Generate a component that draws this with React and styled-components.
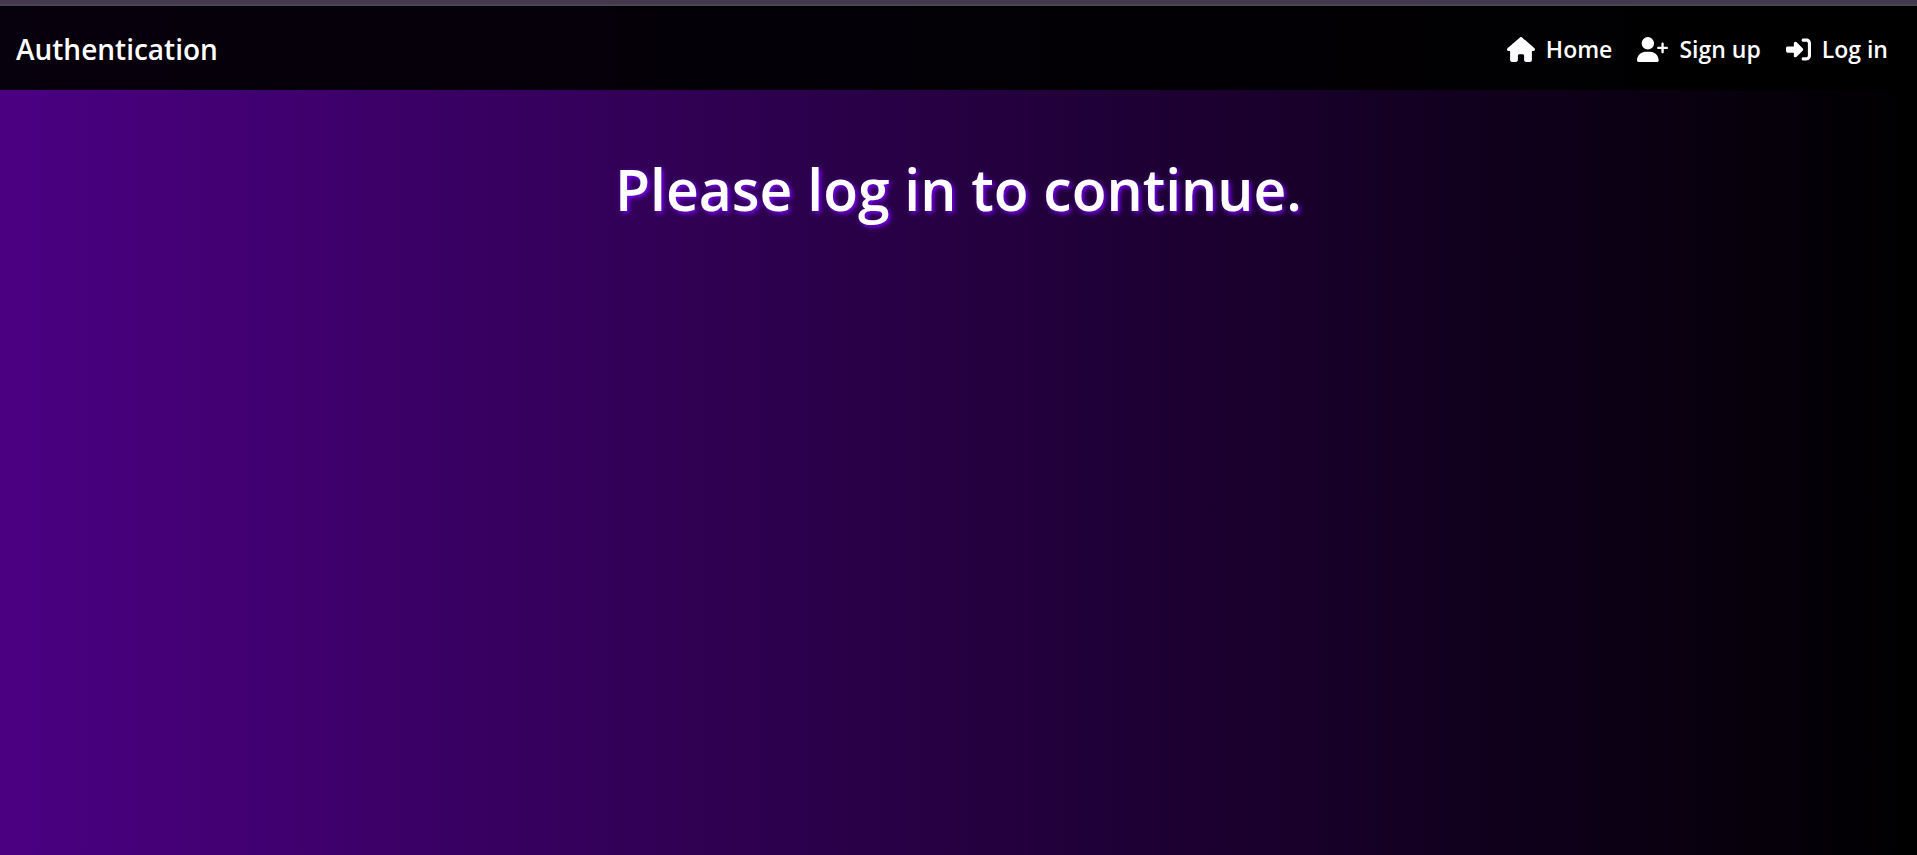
import React from "react";
import styled, { createGlobalStyle } from "styled-components";
import { FaHouse, FaUserPlus, FaRightToBracket } from "react-icons/fa6";

const GlobalStyle = createGlobalStyle`
  * { box-sizing: border-box; }
  body {
    margin: 0;
    font-family: "Segoe UI", "Open Sans", "Noto Sans", sans-serif;
    color: #fff;
  }
`;

const Page = styled.div`
  min-height: 100vh;
  background: linear-gradient(to right, #4b0082, #000);
`;

const TopStrip = styled.div`
  height: 6px;
  background: #43394f;
  border-bottom: 2px solid #4a464f;
`;

const NavBar = styled.nav`
  display: flex;
  justify-content: space-between;
  align-items: center;
  height: 84px;
  padding: 2px 29px 0 16px;
  background: rgba(0, 0, 0, 0.9);
`;

const Brand = styled.a`
  color: #fff;
  font-size: 28px;
  font-weight: 600;
  text-decoration: none;
`;

const NavLinks = styled.div`
  display: flex;
  gap: 25px;
`;

const NavLink = styled.a`
  display: flex;
  align-items: center;
  gap: 11px;
  color: #fff;
  font-size: 23px;
  font-weight: 600;
  text-decoration: none;

  svg {
    width: ${(props) => props.$iconWidth}px;
    height: 25px;
  }
`;

const Main = styled.main`
  padding: 59px 16px;
  text-align: center;
`;

const Title = styled.h1`
  margin: 0;
  font-size: 57px;
  line-height: 80px;
  font-weight: 600;
  text-shadow: 2px 2px 5px #7f00ff;
`;

export default function App() {
  return (
    <Page>
      <GlobalStyle />
      <TopStrip />
      <NavBar>
        <Brand href="#">Authentication</Brand>
        <NavLinks>
          <NavLink href="#home" $iconWidth={28}><FaHouse aria-hidden="true" />Home</NavLink>
          <NavLink href="#signup" $iconWidth={31}><FaUserPlus aria-hidden="true" />Sign up</NavLink>
          <NavLink href="#login" $iconWidth={25}><FaRightToBracket aria-hidden="true" />Log in</NavLink>
        </NavLinks>
      </NavBar>
      <Main>
        <Title>Please log in to continue.</Title>
      </Main>
    </Page>
  );
}
